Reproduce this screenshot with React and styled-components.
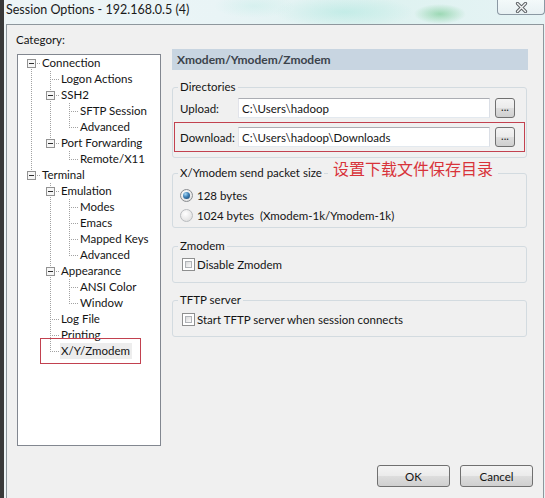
import React from 'react';
import styled, { createGlobalStyle } from 'styled-components';

const Global = createGlobalStyle`
  html, body { margin: 0; padding: 0; height: 100%; overflow: hidden; background: #f0f0f0; }
  #root { height: 100%; }
  * { box-sizing: border-box; }
`;

const UI_FONT = `Lato, "Noto Sans", "Liberation Sans", sans-serif`;

const Screen = styled.div`
  display: flex;
  height: 100%;
  font-family: ${UI_FONT};
  font-size: 11.5px;
  color: #141414;
`;

const Strip = styled.div`
  flex: none;
  width: 4px;
  background: #3a3a3a;
`;

const Frame = styled.div`
  flex: 1;
  min-width: 0;
  display: flex;
  flex-direction: column;
  background:
    radial-gradient(ellipse 26px 10px at 436px 14px, rgba(100, 195, 130, 0.55), rgba(100, 195, 130, 0) 100%),
    radial-gradient(ellipse 70px 16px at 340px 12px, rgba(160, 228, 218, 0.45), rgba(160, 228, 218, 0) 100%),
    radial-gradient(ellipse 40px 12px at 250px 6px, rgba(190, 236, 230, 0.4), rgba(190, 236, 230, 0) 100%),
    linear-gradient(to right, #eef5f7 0%, #e9f4f6 40%, #def2f0 70%, #e6f3f5 100%);
`;

const TitleBar = styled.div`
  flex: none;
  height: 24px;
  display: flex;
  justify-content: space-between;
  align-items: flex-start;
  padding-left: 2px;
`;

const Title = styled.div`
  font-size: 12.5px;
  line-height: 20px;
  color: #1a1a1a;
  white-space: nowrap;
`;

const CloseButton = styled.div`
  width: 48px;
  height: 15px;
  border: 1px solid #8b98a3;
  border-top: none;
  border-radius: 0 0 4px 4px;
  background: linear-gradient(rgba(255, 255, 255, 0.55), rgba(232, 240, 243, 0.8));
  display: flex;
  align-items: center;
  justify-content: center;
`;

const Client = styled.div`
  flex: 1;
  margin: 0 1px 0 2px;
  border: 1px solid #8e979d;
  border-bottom: none;
  background: #f0f0f0;
  padding: 7px 10px 0 10px;
  display: flex;
  flex-direction: column;
`;

const Body = styled.div`
  display: grid;
  grid-template-columns: 144px 356px;
  column-gap: 11px;
  align-items: start;
`;

const LeftColumn = styled.div`
  display: flex;
  flex-direction: column;
`;

const CategoryLabel = styled.div`
  line-height: 16px;
  margin-left: -1px;
`;

const TreeBox = styled.div`
  position: relative;
  margin-top: 6px;
  height: 392px;
  border: 1px solid #828790;
  background: #fff;
  padding-left: 4px;
`;

const TreeRowEl = styled.div`
  display: flex;
  align-items: center;
  height: 16px;
`;

const GuideSvg = styled.svg`
  flex: none;
  display: block;
`;

const NodeLabel = styled.span`
  line-height: 16px;
  padding: 0 2px 0 1px;
  white-space: nowrap;
  background: ${(p) => (p.$selected ? '#ededed' : 'transparent')};
`;

const TreeMark = styled.div`
  position: absolute;
  left: 22px;
  top: 283px;
  width: 101px;
  height: 26px;
  border: 1px solid #c2414f;
  pointer-events: none;
`;

const RightColumn = styled.div`
  position: relative;
  margin-top: 17px;
  display: flex;
  flex-direction: column;
`;

const PageHeader = styled.div`
  height: 21px;
  background: #c8d5e1;
  font-weight: 700;
  font-size: 12px;
  line-height: 21px;
  padding-left: 5px;
  color: #3b434b;
`;

const Group = styled.fieldset`
  margin: ${(p) => p.$gap}px 1px 0 0;
  min-inline-size: 0;
  padding: 0 0 ${(p) => p.$bottom}px 0;
  border: 1px solid #d3dbe0;
  border-radius: 3px;
`;

const GroupTitle = styled.legend`
  margin-left: 5px;
  padding: 0 2px;
  line-height: 14px;
  font-size: 11.5px;
`;

const PathRow = styled.div`
  display: flex;
  align-items: center;
  margin: ${(p) => (p.$framed ? '4px 1px 0 1px' : '4px 0 0 0')};
  padding: ${(p) => (p.$framed ? '4px 0 4px 5px' : '0 0 0 7px')};
  border: ${(p) => (p.$framed ? '1px solid #c2414f' : 'none')};
`;

const PathLabel = styled.span`
  width: 58px;
  flex: none;
`;

const PathInput = styled.input`
  width: 252px;
  height: 20px;
  border: 1px solid;
  border-color: #abadb3 #dbdfe6 #e3e9ef #e2e3ea;
  background: #fff;
  padding: 0 0 0 3px;
  font: inherit;
  color: #141414;
  outline: none;
`;

const BrowseButton = styled.button`
  width: 20px;
  height: 20px;
  margin-left: 5px;
  padding: 0 0 3px 0;
  border: 1px solid #707070;
  border-radius: 3px;
  background: linear-gradient(#f4f4f4 0%, #ebebeb 48%, #dddddd 52%, #cfcfcf 100%);
  font: inherit;
  font-size: 11px;
  line-height: 14px;
  color: #222;
  display: flex;
  align-items: flex-end;
  justify-content: center;
`;

const OptionRow = styled.div`
  display: flex;
  align-items: center;
  height: ${(p) => p.$h}px;
  padding-left: ${(p) => p.$indent}px;
  white-space: pre;
`;

const Radio = styled.span`
  flex: none;
  width: 13px;
  height: 13px;
  border-radius: 50%;
  border: 1px solid ${(p) => (p.$on ? '#8a8d90' : '#b9bcbf')};
  background: radial-gradient(circle at 40% 35%, #ffffff 0%, #e8e8e8 60%, #d6d6d6 100%);
  display: flex;
  align-items: center;
  justify-content: center;
  margin-right: 4px;
  &::after {
    content: '';
    width: 7px;
    height: 7px;
    border-radius: 50%;
    display: ${(p) => (p.$on ? 'block' : 'none')};
    background: radial-gradient(circle at 35% 30%, #a6d8f5 0%, #3d7fb5 45%, #173e63 100%);
  }
`;

const Checkbox = styled.span`
  flex: none;
  width: 13px;
  height: 13px;
  border: 1px solid #8e8f8f;
  background: #fff;
  margin-right: 2px;
  padding: 2px;
  display: flex;
  &::after {
    content: '';
    flex: 1;
    border: 1px solid #b1b4b8;
    background: linear-gradient(135deg, #d9dadb 0%, #eeeeee 60%, #fafafa 100%);
  }
`;

const Annotation = styled.div`
  position: absolute;
  left: 156px;
  top: 109px;
  padding: 0 5px;
  background: #f0f0f0;
  color: #d8333a;
  font-family: "Noto Sans CJK SC", "Noto Sans", sans-serif;
  font-size: 16px;
  line-height: 20px;
  white-space: nowrap;
`;

const ButtonBar = styled.div`
  display: flex;
  justify-content: flex-end;
  gap: 10px;
  margin-top: 19px;
`;

const DialogButton = styled.button`
  width: 73px;
  height: 22px;
  padding: 0;
  border: 1px solid #707070;
  border-radius: 3px;
  background: linear-gradient(#f4f4f4 0%, #ebebeb 48%, #dddddd 52%, #cfcfcf 100%);
  font: inherit;
  color: #141414;
`;

const treeRows = [
  { label: 'Connection', level: 0, box: true },
  { label: 'Logon Actions', level: 1 },
  { label: 'SSH2', level: 1, box: true },
  { label: 'SFTP Session', level: 2 },
  { label: 'Advanced', level: 2 },
  { label: 'Port Forwarding', level: 1, box: true },
  { label: 'Remote/X11', level: 2 },
  { label: 'Terminal', level: 0, box: true },
  { label: 'Emulation', level: 1, box: true },
  { label: 'Modes', level: 2 },
  { label: 'Emacs', level: 2 },
  { label: 'Mapped Keys', level: 2 },
  { label: 'Advanced', level: 2 },
  { label: 'Appearance', level: 1, box: true },
  { label: 'ANSI Color', level: 2 },
  { label: 'Window', level: 2 },
  { label: 'Log File', level: 1 },
  { label: 'Printing', level: 1 },
  { label: 'X/Y/Zmodem', level: 1, selected: true },
];

function buildTree(rows) {
  const n = rows.length;
  const isLast = rows.map((r, i) => {
    for (let j = i + 1; j < n; j++) {
      if (rows[j].level < r.level) return true;
      if (rows[j].level === r.level) return false;
    }
    return true;
  });
  const stack = [];
  return rows.map((r, i) => {
    stack[r.level] = i;
    stack.length = r.level + 1;
    const cont = [];
    for (let d = 0; d < r.level; d++) cont.push(!isLast[stack[d]]);
    return { ...r, last: isLast[i], first: i === 0, cont };
  });
}

const COL = 19;

function Guides({ level, cont, last, first, box }) {
  const w = COL * (level + 1);
  const cx = COL * level + 9.5;
  return (
    <GuideSvg width={w} height={16} viewBox={`0 0 ${w} 16`}>
      <g stroke="#a2a2a2" strokeWidth="1" strokeDasharray="1 1" shapeRendering="crispEdges">
        {cont.map((c, d) =>
          c ? <line key={d} x1={COL * d + 9.5} x2={COL * d + 9.5} y1={0} y2={16} /> : null
        )}
        <line x1={cx} x2={cx} y1={first ? 8 : 0} y2={last ? 8 : 16} />
        <line x1={cx - 0.5} x2={w} y1={8.5} y2={8.5} />
      </g>
      {box && (
        <g shapeRendering="crispEdges">
          <rect x={cx - 4} y={4.5} width={8} height={8} fill="#f6f6f6" stroke="#929292" />
          <line x1={cx - 2.5} x2={cx + 2.5} y1={8.5} y2={8.5} stroke="#2e2e2e" />
        </g>
      )}
    </GuideSvg>
  );
}

function TreeRow({ node }) {
  return (
    <TreeRowEl>
      <Guides {...node} />
      <NodeLabel $selected={node.selected}>{node.label}</NodeLabel>
    </TreeRowEl>
  );
}

function CloseGlyph() {
  return (
    <svg width="13" height="11" viewBox="0 0 13 11">
      <path d="M2.5 1.5 L10.5 9.5 M10.5 1.5 L2.5 9.5" stroke="#5a5f63" strokeWidth="3.2" strokeLinecap="round" fill="none" />
      <path d="M2.5 1.5 L10.5 9.5 M10.5 1.5 L2.5 9.5" stroke="#f4f6f7" strokeWidth="1.4" strokeLinecap="round" fill="none" />
    </svg>
  );
}

export default function App() {
  const nodes = buildTree(treeRows);
  return (
    <>
      <Global />
      <Screen>
        <Strip />
        <Frame>
          <TitleBar>
            <Title>Session Options - 192.168.0.5 (4)</Title>
            <CloseButton>
              <CloseGlyph />
            </CloseButton>
          </TitleBar>
          <Client>
            <Body>
              <LeftColumn>
                <CategoryLabel>Category:</CategoryLabel>
                <TreeBox>
                  {nodes.map((n, i) => (
                    <TreeRow key={i} node={n} />
                  ))}
                  <TreeMark />
                </TreeBox>
              </LeftColumn>
              <RightColumn>
                <PageHeader>Xmodem/Ymodem/Zmodem</PageHeader>
                <Group $gap={10} $bottom={5}>
                  <GroupTitle>Directories</GroupTitle>
                  <PathRow>
                    <PathLabel>Upload:</PathLabel>
                    <PathInput readOnly value="C:\Users\hadoop" />
                    <BrowseButton>...</BrowseButton>
                  </PathRow>
                  <PathRow $framed>
                    <PathLabel>Download:</PathLabel>
                    <PathInput readOnly value="C:\Users\hadoop\Downloads" />
                    <BrowseButton>...</BrowseButton>
                  </PathRow>
                </Group>
                <Group $gap={8} $bottom={2}>
                  <GroupTitle>X/Ymodem send packet size</GroupTitle>
                  <OptionRow $h={20} $indent={7} style={{ marginTop: 5 }}>
                    <Radio $on />
                    128 bytes
                  </OptionRow>
                  <OptionRow $h={20} $indent={7}>
                    <Radio />
                    {'1024 bytes  (Xmodem-1k/Ymodem-1k)'}
                  </OptionRow>
                </Group>
                <Group $gap={11} $bottom={10}>
                  <GroupTitle>Zmodem</GroupTitle>
                  <OptionRow $h={16} $indent={9} style={{ marginTop: 3 }}>
                    <Checkbox />
                    Disable Zmodem
                  </OptionRow>
                </Group>
                <Group $gap={10} $bottom={9}>
                  <GroupTitle>TFTP server</GroupTitle>
                  <OptionRow $h={16} $indent={9} style={{ marginTop: 4 }}>
                    <Checkbox />
                    Start TFTP server when session connects
                  </OptionRow>
                </Group>
                <Annotation>设置下载文件保存目录</Annotation>
              </RightColumn>
            </Body>
            <ButtonBar>
              <DialogButton>OK</DialogButton>
              <DialogButton>Cancel</DialogButton>
            </ButtonBar>
          </Client>
        </Frame>
      </Screen>
    </>
  );
}
